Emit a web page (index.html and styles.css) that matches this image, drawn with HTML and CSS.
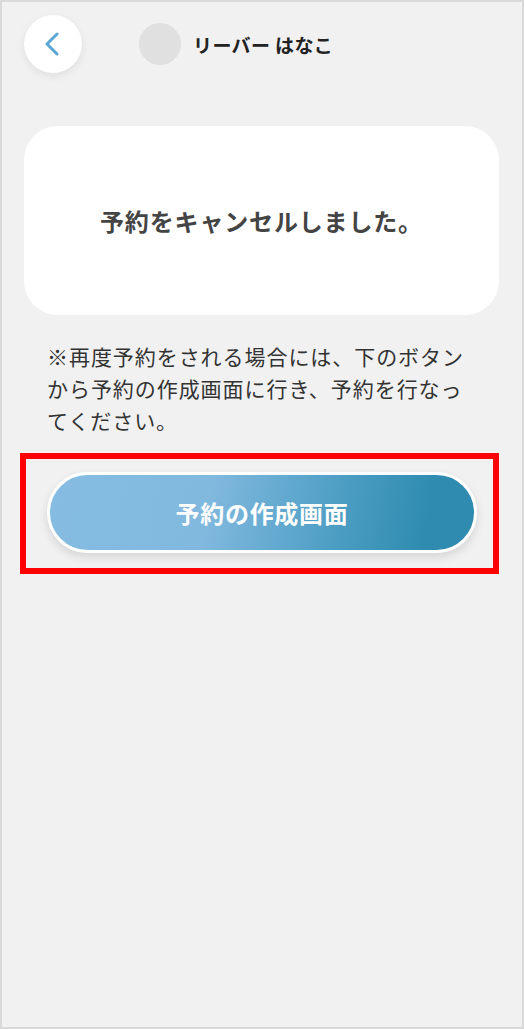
FILE: index.html
```html
<!DOCTYPE html>
<html lang="ja">
<head>
  <meta charset="UTF-8" />
  <meta name="viewport" content="width=device-width, initial-scale=1.0"/>
  <title>予約キャンセル</title>
  <link rel="stylesheet" href="styles.css">
</head>
<body>
  <div class="screen">
    <!-- Header -->
    <header class="top-bar">
      <button class="back-btn" aria-label="戻る">
        <svg width="16" height="24" viewBox="0 0 16 24">
          <path d="M13 2 L3 12 L13 22" fill="none" stroke="#5aa7d6" stroke-width="3" stroke-linecap="round" stroke-linejoin="round"/>
        </svg>
      </button>
      <div class="user">
        <span class="avatar"></span>
        <span class="user-name">リーバー はなこ</span>
      </div>
    </header>

    <!-- Content -->
    <main class="content">
      <div class="message-card">
        <p>予約をキャンセルしました。</p>
      </div>
      <p class="note">※再度予約をされる場合には、下のボタンから予約の作成画面に行き、予約を行なってください。</p>
      <div class="highlight">
        <a href="#" class="create-btn">予約の作成画面</a>
      </div>
    </main>
  </div>
</body>
</html>
```

FILE: styles.css
```css
* {
  margin: 0;
  padding: 0;
  box-sizing: border-box;
  font-family: "Noto Sans CJK JP", "Noto Sans", sans-serif;
}

body {
  background-color: #f1f1f1;
}

.screen {
  width: 524px;
  height: 1029px;
  border: 2px solid #d9d9d9;
  background-color: #f1f1f1;
}

.top-bar {
  display: flex;
  align-items: center;
  padding: 13px 0 0 22px;
}

.back-btn {
  width: 58px;
  height: 58px;
  border-radius: 50%;
  border: none;
  background-color: #fff;
  box-shadow: 0 3px 8px rgba(0, 0, 0, 0.08);
  display: flex;
  justify-content: center;
  align-items: center;
  padding-right: 2px;
  cursor: pointer;
}

.user {
  display: flex;
  align-items: center;
  margin-left: 57px;
}

.avatar {
  width: 42px;
  height: 42px;
  border-radius: 50%;
  background-color: #e0e0e0;
}

.user-name {
  margin-left: 12px;
  font-size: 19px;
  font-weight: 700;
  color: #222;
  letter-spacing: 0.02em;
}

.content {
  padding: 0 23px 0 22px;
}

.message-card {
  margin-top: 53px;
  height: 189px;
  background-color: #fff;
  border-radius: 34px;
  display: flex;
  justify-content: center;
  align-items: center;
}

.message-card p {
  font-size: 24px;
  font-weight: 700;
  color: #444;
  letter-spacing: 0.035em;
}

.note {
  margin-top: 25px;
  padding: 0 20px 0 23px;
  font-size: 21px;
  line-height: 32px;
  letter-spacing: 0.045em;
  color: #333;
}

/* Annotation frame around the button */
.highlight {
  margin: 17px 0 0 -4px;
  border: 6px solid #ff0000;
  padding: 13px 16px 15px 21px;
}

.create-btn {
  display: flex;
  justify-content: center;
  align-items: center;
  height: 81px;
  border-radius: 41px;
  border: 3px solid #fff;
  background: linear-gradient(100deg, #86bce2 0%, #80b8de 38%, #4c9dc3 68%, #2f8cb0 88%, #2f8cb0 100%);
  box-shadow: 0 4px 10px rgba(0, 0, 0, 0.12);
  color: #fff;
  font-size: 24px;
  font-weight: 700;
  letter-spacing: 0.03em;
  text-decoration: none;
}
```
